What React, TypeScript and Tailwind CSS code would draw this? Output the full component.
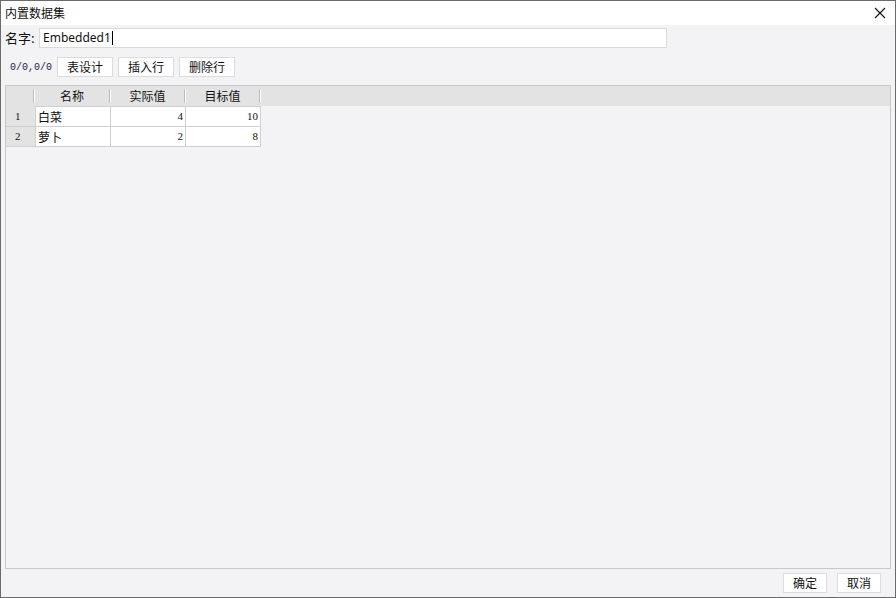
import React from 'react';

const cjk = { fontFamily: '"Noto Sans CJK SC", "Noto Sans", sans-serif' };
const serif = { fontFamily: '"Liberation Serif", "Noto Sans CJK SC", serif' };

interface Row {
  name: string;
  actual: number;
  target: number;
}

const rows: Row[] = [
  { name: '白菜', actual: 4, target: 10 },
  { name: '萝卜', actual: 2, target: 8 },
];

const Btn: React.FC<{ label: string; className?: string }> = ({ label, className = '' }) => (
  <button
    className={`h-[20px] bg-white border border-[#dcdcdc] text-[12px] leading-none text-[#111] flex items-center justify-center ${className}`}
    style={cjk}
  >
    {label}
  </button>
);

const HeadSep = () => (
  <div className="flex h-[14px] self-center">
    <div className="w-px bg-[#bdbdbd]" />
    <div className="w-px bg-white" />
  </div>
);

export default function App() {
  return (
    <div className="w-[896px] h-[598px] border border-[#6b6b6b] bg-[#f3f3f5] flex flex-col overflow-hidden">
      {/* title bar */}
      <div className="h-[24px] bg-white flex items-center justify-between pl-[4px] pr-[9px] shrink-0">
        <span className="text-[12px] text-[#111]" style={cjk}>内置数据集</span>
        <svg width="12" height="12" viewBox="0 0 12 12">
          <path d="M1 1 L11 11 M11 1 L1 11" stroke="#111" strokeWidth="1.1" fill="none" />
        </svg>
      </div>

      {/* name */}
      <div className="flex items-center h-[20px] mt-[3px] pl-[4px]">
        <span className="text-[13px] text-[#111] w-[34px]" style={cjk}>名字:</span>
        <div className="w-[628px] h-[20px] bg-white border border-[#d9d9d9] flex items-center pl-[3px]">
          <span className="text-[12px] text-[#111]" style={{ fontFamily: '"Noto Sans", sans-serif' }}>Embedded1</span>
          <span className="w-px h-[14px] bg-black ml-px" />
        </div>
      </div>

      {/* toolbar */}
      <div className="flex items-center h-[20px] mt-[9px] pl-[9px]">
        <span className="text-[10px] text-[#1c1c4e] w-[47px]" style={{ fontFamily: '"Liberation Mono", monospace' }}>0/0,0/0</span>
        <Btn label="表设计" className="w-[56px]" />
        <Btn label="插入行" className="w-[56px] ml-[5px]" />
        <Btn label="删除行" className="w-[56px] ml-[5px]" />
      </div>

      {/* grid */}
      <div className="flex-1 mt-[8px] mx-[4px] border border-[#c8c8c8] bg-[#f3f3f5] flex flex-col">
        <div className="h-[20px] bg-[#e3e3e3] flex items-stretch text-[12px] text-[#111]" style={cjk}>
          <div className="w-[27px]" />
          <HeadSep />
          <div className="w-[74px] flex items-center justify-center">名称</div>
          <HeadSep />
          <div className="w-[73px] flex items-center justify-center">实际值</div>
          <HeadSep />
          <div className="w-[73px] flex items-center justify-center">目标值</div>
          <HeadSep />
        </div>
        {rows.map((r, i) => (
          <div key={i} className={`flex ${i === 0 ? 'h-[21px]' : 'h-[20px]'}`}>
            <div
              className="w-[29px] bg-[#e3e3e3] border-b border-[#cfcfcf] flex items-center pl-[9px] text-[11px] text-[#111]"
              style={serif}
            >
              {i + 1}
            </div>
            <div
              className={`w-[76px] bg-white border-l border-r border-b border-[#d0d0d0] ${i === 0 ? 'border-t' : ''} flex items-center pl-[2px] text-[12px] text-[#111]`}
              style={cjk}
            >
              {r.name}
            </div>
            <div
              className={`w-[75px] bg-white border-r border-b border-[#d0d0d0] ${i === 0 ? 'border-t' : ''} flex items-center justify-end pr-[2px] text-[11px] text-[#111]`}
              style={serif}
            >
              {r.actual}
            </div>
            <div
              className={`w-[75px] bg-white border-r border-b border-[#d0d0d0] ${i === 0 ? 'border-t' : ''} flex items-center justify-end pr-[2px] text-[11px] text-[#111]`}
              style={serif}
            >
              {r.target}
            </div>
          </div>
        ))}
      </div>

      {/* footer */}
      <div className="flex justify-end gap-[10px] mt-[4px] mb-[4px] pr-[14px]">
        <Btn label="确定" className="w-[44px]" />
        <Btn label="取消" className="w-[44px]" />
      </div>
    </div>
  );
}
